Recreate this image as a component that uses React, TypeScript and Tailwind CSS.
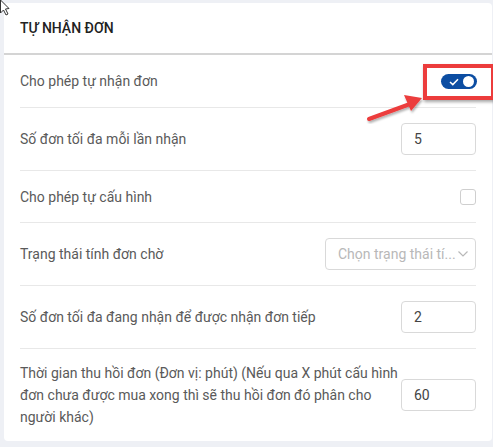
import React from 'react';

function Toggle() {
  return (
    <div className="relative flex h-[15px] w-[36px] items-center rounded-full bg-[#0c4da2]">
      <svg className="absolute left-[8px] top-[4px]" width="10" height="8" viewBox="0 0 10 8">
        <path d="M1 4 L3.8 6.6 L9 1.2" fill="none" stroke="white" strokeWidth="1.5" />
      </svg>
      <div className="absolute right-[3px] top-[2px] h-[11px] w-[11px] rounded-full bg-white" />
    </div>
  );
}

function NumberBox({ value }: { value: string }) {
  return (
    <div className="flex h-[32px] w-[75px] shrink-0 items-center rounded-[4px] border border-[#d9d9d9] px-3 text-[14px] text-[#444]">
      {value}
    </div>
  );
}

function Row({ label, children, last, tight }: { label: React.ReactNode; children: React.ReactNode; last?: boolean; tight?: boolean }) {
  return (
    <div className={`flex items-center justify-between ${last ? 'py-[13px]' : 'border-b border-[#e8e8e8]'} ${!last && tight ? 'py-[14.5px]' : ''} ${!last && !tight ? 'py-[15px]' : ''}`}>
      <div className="text-[14px] leading-[22px] text-[#5a5a5a]">{label}</div>
      {children}
    </div>
  );
}

export default function App() {
  return (
    <div className="relative h-[447px] w-[493px] overflow-hidden bg-[#eef0f5] pl-[4px] pt-[3px] font-['Roboto',sans-serif]">
      <div className="w-[488px] rounded-[4px] bg-white">
        <div className="flex h-[52px] items-center border-b-2 border-[#d4d4d4] px-4 pt-[1px] text-[14px] font-medium text-[#222]">
          TỰ NHẬN ĐƠN
        </div>
        <div className="px-4">
          <Row label="Cho phép tự nhận đơn">
            <div className="mr-[-1px] flex h-[22px] items-center">
              <Toggle />
            </div>
          </Row>
          <Row label="Số đơn tối đa mỗi lần nhận">
            <NumberBox value="5" />
          </Row>
          <Row tight label="Cho phép tự cấu hình">
            <div className="h-[16px] w-[16px] rounded-[3px] border border-[#cfcfcf]" />
          </Row>
          <Row label="Trạng thái tính đơn chờ">
            <div className="flex h-[32px] w-[151px] items-center justify-between rounded-[4px] border border-[#d9d9d9] pl-3 pr-[6px] text-[14px] text-[#b8b8b8]">
              <span>Chọn trạng thái tí...</span>
              <svg width="12" height="8" viewBox="0 0 12 8">
                <path d="M1.5 1.5 L6 6 L10.5 1.5" fill="none" stroke="#b8b8b8" strokeWidth="1.2" />
              </svg>
            </div>
          </Row>
          <Row label="Số đơn tối đa đang nhận để được nhận đơn tiếp">
            <NumberBox value="2" />
          </Row>
          <Row
            last
            label={
              <div className="w-[380px]">
                Thời gian thu hồi đơn (Đơn vị: phút) (Nếu qua X phút cấu hình đơn chưa được mua xong thì sẽ thu hồi đơn đó phân cho người khác)
              </div>
            }
          >
            <NumberBox value="60" />
          </Row>
        </div>
      </div>

      {/* annotation box */}
      <div className="absolute left-[423px] top-[64px] h-[36px] w-[72px] border-4 border-[#ec3c3c] shadow-[1px_2px_3px_rgba(0,0,0,0.35)]" />
      <svg className="absolute left-0 top-0" width="493" height="447" viewBox="0 0 493 447">
        <defs>
          <filter id="sh" x="-20%" y="-20%" width="140%" height="140%">
            <feDropShadow dx="1" dy="2" stdDeviation="1" floodColor="#000" floodOpacity="0.3" />
          </filter>
        </defs>
        <g filter="url(#sh)">
          <line x1="369" y1="119" x2="410" y2="104" stroke="#ec3c3c" strokeWidth="4" strokeLinecap="round" />
          <polygon points="422,98 404,95 411,111" fill="#ec3c3c" />
        </g>
        <path d="M0.5 0 L9 8.5 L5.5 9 L8 14 L6 15 L3.5 10 L0.5 13 Z" fill="white" stroke="#333" strokeWidth="1" />
      </svg>
    </div>
  );
}
